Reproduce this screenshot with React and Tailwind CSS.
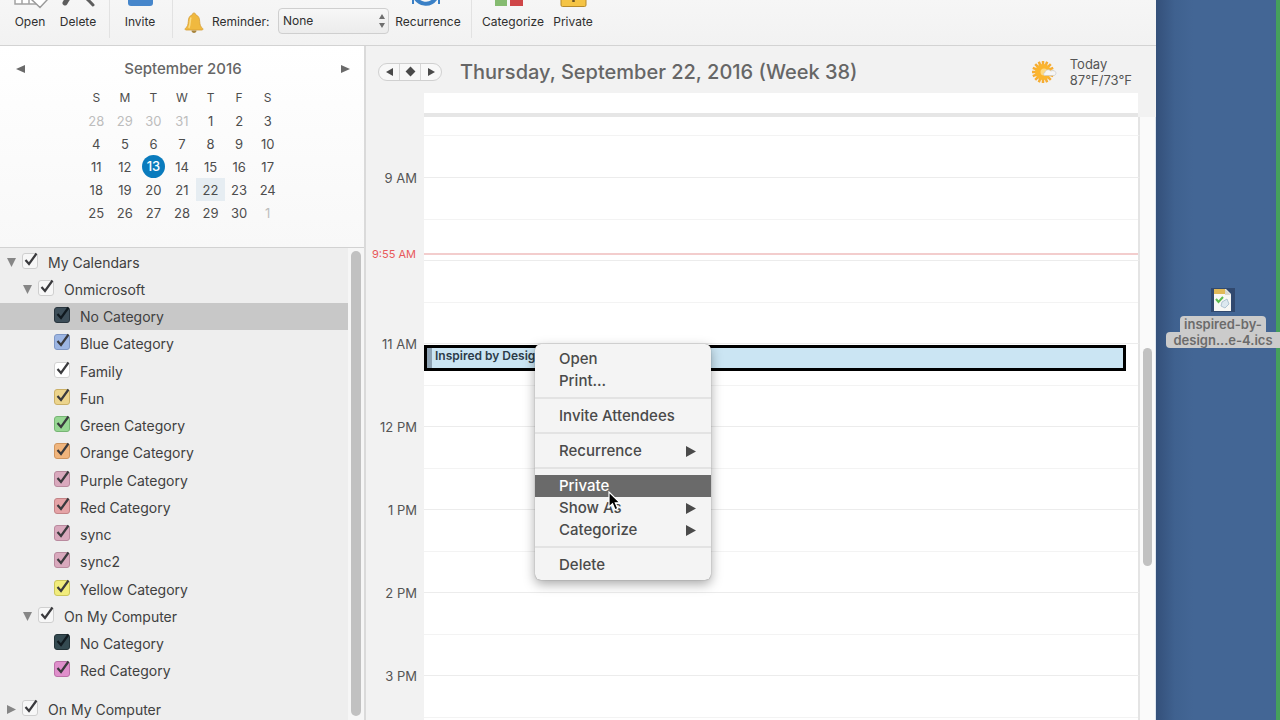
import { useState } from 'react';

const weekDays = ['S', 'M', 'T', 'W', 'T', 'F', 'S'];

const weeks = [
  [28, 29, 30, 31, 1, 2, 3],
  [4, 5, 6, 7, 8, 9, 10],
  [11, 12, 13, 14, 15, 16, 17],
  [18, 19, 20, 21, 22, 23, 24],
  [25, 26, 27, 28, 29, 30, 1]
];

const calendars = [
  { id: 'mine', name: 'My Calendars', level: 0, open: true },
  { id: 'onms', name: 'Onmicrosoft', level: 1, open: true },
  { id: 'none', name: 'No Category', level: 2, color: 'bg-[#3d4e59] border-[#28343d]', dark: true, selected: true },
  { id: 'blue', name: 'Blue Category', level: 2, color: 'bg-[#9db6e3] border-[#7f97c4]' },
  { id: 'family', name: 'Family', level: 2, color: 'bg-white border-[#d2d2d2]' },
  { id: 'fun', name: 'Fun', level: 2, color: 'bg-[#ecd48c] border-[#cbb067]' },
  { id: 'green', name: 'Green Category', level: 2, color: 'bg-[#97d793] border-[#77b574]' },
  { id: 'orange', name: 'Orange Category', level: 2, color: 'bg-[#f0b57d] border-[#cf9660]' },
  { id: 'purple', name: 'Purple Category', level: 2, color: 'bg-[#d9a9bd] border-[#b98a9e]' },
  { id: 'red', name: 'Red Category', level: 2, color: 'bg-[#e5a3a6] border-[#c38487]' },
  { id: 'sync', name: 'sync', level: 2, color: 'bg-[#d9a9bd] border-[#b98a9e]' },
  { id: 'sync2', name: 'sync2', level: 2, color: 'bg-[#d9a9bd] border-[#b98a9e]' },
  { id: 'yellow', name: 'Yellow Category', level: 2, color: 'bg-[#f1ec7c] border-[#ccc65c]' },
  { id: 'omc', name: 'On My Computer', level: 1, open: true },
  { id: 'omc-none', name: 'No Category', level: 2, color: 'bg-[#344a51] border-[#233338]', dark: true },
  { id: 'omc-red', name: 'Red Category', level: 2, color: 'bg-[#df8fcb] border-[#bb70a8]' },
  { id: 'omc2', name: 'On My Computer', level: 0, open: false, last: true }
];

const hours = ['9 AM', '', '11 AM', '12 PM', '1 PM', '2 PM', '3 PM'];

const menuGroups = [
  [{ label: 'Open' }, { label: 'Print...' }],
  [{ label: 'Invite Attendees' }],
  [{ label: 'Recurrence', sub: true }],
  [{ label: 'Private', active: true }, { label: 'Show As', sub: true }, { label: 'Categorize', sub: true }],
  [{ label: 'Delete' }]
];

const Triangle = ({ dir, className }) => {
  const points = {
    left: '10,0 10,10 0,5',
    right: '0,0 0,10 10,5',
    down: '0,0 10,0 5,10'
  };
  return (
    <svg viewBox="0 0 10 10" preserveAspectRatio="none" className={className} fill="currentColor" aria-hidden="true">
      <polygon points={points[dir]} />
    </svg>
  );
};

const ToolButton = ({ label, className, children }) => (
  <button className={`flex shrink-0 flex-col items-center justify-end text-xs leading-4 ${className}`}>
    {children}
    {label}
  </button>
);

const Divider = ({ className }) => <div className={`h-full w-px shrink-0 bg-[#e2e2e2] ${className}`} />;

const Toolbar = () => (
  <div className="flex h-[46px] shrink-0 items-end overflow-hidden border-b border-[#d3d3d3] bg-gradient-to-b from-[#f6f6f6] to-[#f2f2f2] pb-[15px] pl-3 text-[#2f2f2f]">
    <ToolButton label="Open" className="w-9">
      <svg viewBox="0 0 36 32" className="mb-1 h-8 w-9" fill="#fff" stroke="#a3a3a3" strokeWidth="1.5">
        <path d="M3 2h26v24H3zM3 19h26M10 2v24M17 2v24" />
        <path d="M19 21l5-5h8l4 5-8 8.500z" stroke="#9a9a9a" />
      </svg>
    </ToolButton>
    <ToolButton label="Delete" className="ml-2 w-11">
      <svg viewBox="0 0 36 32" className="mb-1 h-8 w-9" fill="none" stroke="#5d5d5d" strokeLinecap="round">
        <path d="M28 4Q12 12 5 25" strokeWidth="5" />
        <path d="M6 5Q21 14 33 27" strokeWidth="3" />
      </svg>
    </ToolButton>
    <div className="-mb-2 flex h-12 shrink-0">
      <Divider className="ml-[9px]" />
    </div>
    <ToolButton label="Invite" className="ml-3 w-9">
      <svg viewBox="0 0 36 32" className="mb-1 h-8 w-9">
        <rect x="6" y="6" width="25" height="22" rx="3" fill="#4686cb" />
      </svg>
    </ToolButton>
    <div className="-mb-2 flex h-12 shrink-0">
      <Divider className="ml-[14px]" />
    </div>
    <svg viewBox="0 0 20 22" className="-mb-1 ml-[11px] h-[22px] w-5 shrink-0">
      <path d="M10 1c1 0 1.700.8 1.700 1.800C14.600 3.800 15.600 6.200 15.700 9.500c.1 3.500 1 5.300 3 7 .6.600.2 1.500-.7 1.500H2c-.9 0-1.300-.9-.7-1.500 2-1.700 2.900-3.500 3-7C4.400 6.200 5.400 3.800 8.300 2.800 8.300 1.800 9 1 10 1z" fill="#f0b93f" stroke="#d59d33" strokeWidth=".8" />
      <path d="M7 5.500C5.800 8 6.600 13 4.800 16" stroke="#f9db83" strokeWidth="1.500" fill="none" />
      <path d="M7.500 18.500h5c0 1.500-1 2.500-2.500 2.500s-2.500-1-2.500-2.500z" fill="#a8843b" />
    </svg>
    <label htmlFor="reminder" className="ml-2 w-[58px] shrink-0 text-xs leading-4">Reminder:</label>
    <div className="relative -mb-1 ml-2 flex w-[111px] shrink-0 flex-col gap-2">
      <div className="h-6 rounded border border-[#cfcfcf] bg-[#f3f3f3]" />
      <select
        id="reminder"
        className="h-[26px] w-full appearance-none rounded border border-[#cfcfcf] bg-gradient-to-b from-[#f7f7f7] to-[#ececec] pl-1 text-xs leading-4"
      >
        <option>None</option>
      </select>
      <svg
        viewBox="0 0 6 14"
        className="pointer-events-none absolute right-1 bottom-[6px] h-[14px] w-[6px] text-[#6f6f6f]"
        fill="currentColor"
      >
        <path d="M0 5l3-5 3 5zM0 9h6l-3 5z" />
      </svg>
    </div>
    <ToolButton label="Recurrence" className="ml-1 w-[70px]">
      <svg viewBox="0 0 36 32" className="mb-1 h-8 w-9" fill="none" stroke="#3a80c6" strokeWidth="4">
        <path d="M4 17C8 27 20 29 26 20" />
        <path d="M3 26v-10h9M22 20h7v6" strokeWidth="2" />
      </svg>
    </ToolButton>
    <div className="-mb-2 flex h-12 shrink-0">
      <Divider className="ml-2" />
    </div>
    <ToolButton label="Categorize" className="ml-2 w-[66px]">
      <svg viewBox="0 0 36 32" className="mb-1 h-8 w-9">
        <path d="M-1 2h13v12h-13z" fill="#5d94d3" />
        <path d="M15 2h13v12H15z" fill="#f0c04c" />
        <path d="M-1 17h13v11h-13z" fill="#85bb70" />
        <path d="M15 17h13v11H15z" fill="#cf4648" />
      </svg>
    </ToolButton>
    <ToolButton label="Private" className="ml-1 w-[46px]">
      <svg viewBox="0 0 36 32" className="mb-1 h-8 w-9">
        <path d="M12 13V8a6 6 0 0 1 12 0v5" fill="none" stroke="#8b8b8b" strokeWidth="3" />
        <rect x="6" y="11" width="25" height="17.500" rx="1.500" fill="#f5c445" stroke="#b78a2b" />
        <path d="M18.500 17v7" stroke="#6b5324" strokeWidth="2.500" />
      </svg>
    </ToolButton>
  </div>
);

const MiniCalendar = () => (
  <div className="h-[202px] shrink-0 border-b border-[#d2d2d2] bg-gradient-to-b from-white to-[#f8f8f8] pt-3 text-[#4d4d4d]">
    <div className="flex items-center justify-between pr-[14px] pl-4">
      <button aria-label="Previous month">
        <Triangle dir="left" className="h-2 w-[9px] text-[#6a6a6a]" />
      </button>
      <h2 className="text-[15px] leading-[22px] font-medium text-[#666]">September 2016</h2>
      <button aria-label="Next month">
        <Triangle dir="right" className="h-2 w-[9px] text-[#6a6a6a]" />
      </button>
    </div>
    <table className="mx-auto mt-[6px] w-[200px] table-fixed border-collapse text-center text-[13px] leading-[22px]">
      <thead>
        <tr className="h-[23px]">
          {weekDays.map((day, i) => (
            <th key={i} className="p-0 text-xs font-normal">{day}</th>
          ))}
        </tr>
      </thead>
      <tbody>
        {weeks.map((week, row) => (
          <tr key={row} className="h-[23px]">
            {week.map((day) => {
              const otherMonth = (row === 0 && day > 20) || (row === 4 && day < 10);
              if (day === 13) {
                return (
                  <td key={day} className="p-0">
                    <span className="mx-auto block size-[23px] rounded-full bg-[#0a7bbd] font-medium text-white">13</span>
                  </td>
                );
              }
              if (day === 22) {
                return (
                  <td key={day} className="bg-[#e6edf2] p-0">{day}</td>
                );
              }
              return (
                <td key={day} className={otherMonth ? 'p-0 text-[#bdbdbd]' : 'p-0'}>{day}</td>
              );
            })}
          </tr>
        ))}
      </tbody>
    </table>
  </div>
);

const CalendarRow = ({ item, checked, onToggle }) => {
  const indent = ['pl-[6px]', 'pl-[22px]', 'pl-[38px]'][item.level];
  return (
    <li
      className={`flex h-[27px] items-center nth-[4n]:mb-px ${indent} ${item.selected ? 'bg-[#c8c8c8]' : ''} ${item.last ? 'mt-3' : ''}`}
    >
      <span className="flex w-4 shrink-0">
        {item.level < 2 && (
          <button aria-label={`Toggle ${item.name}`}>
            <Triangle dir={item.open ? 'down' : 'right'} className="ml-px h-[9px] w-[9px] text-[#868686]" />
          </button>
        )}
      </span>
      <span className="relative mb-1 size-4 shrink-0">
        <input
          id={item.id}
          type="checkbox"
          checked={checked}
          onChange={onToggle}
          className={`block size-4 appearance-none rounded-[3px] border ${item.color || 'border-[#cfcfcf] bg-[#f7f7f7]'}`}
        />
        {checked && (
          <svg
            viewBox="0 0 16 16"
            className={`pointer-events-none absolute inset-0 overflow-visible ${item.dark ? 'text-[#10191f]' : 'text-[#3a3a3d]'}`}
            fill="none"
            stroke="currentColor"
            strokeWidth="2.2"
          >
            <path d="M3.500 7L7 11L14.500 0.500" />
          </svg>
        )}
      </span>
      <label htmlFor={item.id} className="pl-[10px] text-sm text-[#404040]">{item.name}</label>
    </li>
  );
};

const Sidebar = () => {
  const [hidden, setHidden] = useState([]);

  const toggle = (id) => {
    setHidden(hidden.includes(id) ? hidden.filter((h) => h !== id) : [...hidden, id]);
  };

  return (
    <aside className="flex w-[366px] shrink-0 flex-col border-r-2 border-[#dadada]">
      <MiniCalendar />
      <div className="flex min-h-0 flex-1 bg-[#eeeeee]">
        <ul className="flex-1 pt-px">
          {calendars.map((item) => (
            <CalendarRow
              key={item.id}
              item={item}
              checked={!hidden.includes(item.id)}
              onToggle={() => toggle(item.id)}
            />
          ))}
        </ul>
        {/* Scrollbar */}
        <div className="w-4 bg-[#f6f6f6] px-[3px] pt-[3px] pb-1">
          <div className="h-full rounded-full bg-[#c1c1c1]" />
        </div>
      </div>
    </aside>
  );
};

const WeatherIcon = () => (
  <svg viewBox="0 0 26 24" className="h-6 w-[26px]">
    <g stroke="#f6ad33" strokeWidth="2.500">
      <path d="M11 1v22M0 12h22M3.200 4.200l15.600 15.600M18.800 4.200L3.200 19.800M6.800 1.800l8.400 20.400M15.200 1.800L6.800 22.200M.8 7.800l20.400 8.400M21.200 7.800L.8 16.200" />
    </g>
    <circle cx="11" cy="12" r="8" fill="#fbb52f" />
    <circle cx="12" cy="12" r="3.500" fill="#fdd983" />
    <path d="M13 15.500c-1.500 0-2-2.500 0-3 .3-3 4.500-3.600 5.500-1.500 3-1 5 0 5.300 1.500.5 1.500-.6 3-2 3z" fill="#f5f5f5" stroke="#c9c9c9" strokeWidth=".7" />
  </svg>
);

const DayHeader = () => (
  <div className="flex h-[47px] shrink-0 items-center pt-1 pr-6 pl-3">
    <div className="flex h-[18px] w-[64px] shrink-0 divide-x divide-[#d6d6d6] rounded-full border border-[#d0d0d0] bg-[#f8f8f8] text-[#4a4a4a]">
      <button aria-label="Previous day" className="flex flex-1 items-center justify-center">
        <Triangle dir="left" className="h-2 w-[7px]" />
      </button>
      <button aria-label="Go to today" className="flex flex-1 items-center justify-center">
        <span className="size-[7px] rotate-45 bg-[#4a4a4a]" />
      </button>
      <button aria-label="Next day" className="flex flex-1 items-center justify-center">
        <Triangle dir="right" className="h-2 w-[7px]" />
      </button>
    </div>
    <h1 className="ml-[18px] flex-1 text-xl font-medium whitespace-nowrap text-[#666]">
      Thursday, September 22, 2016 (Week 38)
    </h1>
    <WeatherIcon />
    <div className="ml-3 pt-px text-[13px] leading-4 text-[#555]">
      <p>Today</p>
      <p>87°F/73°F</p>
    </div>
  </div>
);

const DayGrid = () => (
  <div className="flex min-h-0 flex-1">
    <div className="relative min-w-0 flex-1 overflow-hidden">
      <div className="flex h-[19px]">
        <div className="w-[58px] shrink-0" />
        <div className="flex-1 border-r-2 border-b border-r-[#e4e4e4] border-b-[#f3f3f3] bg-white" />
      </div>
      <div className="flex h-[41px]">
        <div className="w-[58px] shrink-0" />
        <div className="flex-1 border-r-2 border-[#e4e4e4] bg-white" />
      </div>
      {hours.map((hour, i) => (
        <div key={i} className="flex h-[83px]">
          <div className="-mt-[7px] w-[58px] shrink-0 pr-[7px] text-right text-[13px] leading-4 text-[#555]">{hour}</div>
          <div className="flex-1 border-t border-r-2 border-t-[#ececec] border-r-[#e4e4e4] bg-white">
            <div className="h-[42px] border-b border-[#f3f3f3]" />
          </div>
        </div>
      ))}

      {/* Current time */}
      <div className="absolute inset-x-0 top-[129px] flex items-center pr-[2px]">
        <span className="w-[58px] shrink-0 pr-2 text-right text-[11px] leading-4 whitespace-nowrap text-[#e8595b]">
          9:55 AM
        </span>
        <div className="h-[2px] flex-1 bg-[#f3cdcd]" />
      </div>

      {/* Event */}
      <button className="absolute top-[228px] right-[14px] left-[58px] flex h-[26px] border-[3px] border-black bg-[#cbe5f3] text-left text-xs leading-4 font-semibold text-[#2b3b48]">
        <span className="mr-[3px] h-full w-[5px] bg-[#8ea3b4]" />
        Inspired by Design
      </button>
    </div>
    {/* Scrollbar */}
    <div className="w-4 border-r border-[#dde5ee] bg-[#fafafa] pt-[231px] pr-[3px] pl-[3px]">
      <div className="h-[218px] rounded-full bg-[#c1c1c1]" />
    </div>
  </div>
);

const ContextMenu = () => (
  <div
    role="menu"
    className="absolute top-[344px] left-[535px] w-44 rounded-md bg-[#f4f4f4] py-1 text-[15px] leading-[22px] font-medium text-[#4a4a4a] shadow-[0_4px_12px_rgba(0,0,0,0.35),0_0_1px_rgba(0,0,0,0.5)]"
  >
    {menuGroups.map((group, i) => (
      <div key={i}>
        {i > 0 && <div className="mt-[5px] mb-[6px] h-[2px] bg-[#e3e3e3]" />}
        {group.map((item) => (
          <button
            key={item.label}
            role="menuitem"
            className={`flex h-[22px] w-full items-center justify-between pr-[15px] pl-6 ${item.active ? 'bg-[#6a6a6a] text-white' : ''}`}
          >
            {item.label}
            {item.sub && <Triangle dir="right" className="h-[11px] w-[10px]" />}
          </button>
        ))}
      </div>
    ))}
  </div>
);

const Desktop = () => (
  <div className="relative w-[124px] shrink-0 bg-[#436695] bg-gradient-to-r from-[#34507a] via-[#3f618f] via-15% to-[#436695] to-30%">
    <div className="ml-auto h-full w-1 bg-[#45a05c]" />
    <button className="absolute top-[288px] left-[10px] flex w-[114px] flex-col items-center">
      <svg viewBox="0 0 24 24" className="size-6">
        <path d="M0 0h24v24H0z" fill="#31496f" />
        <path d="M3 1h12l5 5v17H3z" fill="#f7f7f4" />
        <path d="M3 1h11v5H3z" fill="#e0b958" />
        <path d="M14 1l6 6h-6z" fill="#d8d8d0" />
        <path d="M5 11l2.500 3L12 9" fill="none" stroke="#5dbb4c" strokeWidth="2" />
        <path d="M11 14l5-3 2 5-4 4-4-2z" fill="#dce8ef" stroke="#9fb9c9" strokeWidth=".8" />
      </svg>
      <span className="mt-1 rounded-t bg-[#cbcbcb] px-1 text-[13px] leading-4 font-semibold text-[#6b6b6b]">inspired-by-</span>
      <span className="w-full rounded-l bg-[#cbcbcb] text-center text-[13px] leading-4 font-semibold text-[#6b6b6b]">design...e-4.ics</span>
    </button>
  </div>
);

const App = () => (
  <div className="relative flex h-screen overflow-hidden font-['Inter',sans-serif]">
    <div className="flex min-w-0 flex-1 flex-col bg-[#f2f2f2]">
      <Toolbar />
      <div className="flex min-h-0 flex-1">
        <Sidebar />
        <main className="flex min-w-0 flex-1 flex-col">
          <DayHeader />
          {/* All day strip */}
          <div className="mr-[18px] ml-[58px] h-[24px] shrink-0 border-b-4 border-[#e6e6e6] bg-white" />
          <DayGrid />
        </main>
      </div>
    </div>
    <Desktop />
    <ContextMenu />
    {/* Mouse pointer */}
    <svg viewBox="0 0 14 20" className="pointer-events-none absolute top-[491px] left-[608px] h-5 w-[14px]">
      <path d="M1 1v15l3.500-3.300 2.500 6 2.800-1.200-2.500-5.700H12z" fill="#000" stroke="#fff" strokeWidth="1.200" />
    </svg>
  </div>
);

export default App;
